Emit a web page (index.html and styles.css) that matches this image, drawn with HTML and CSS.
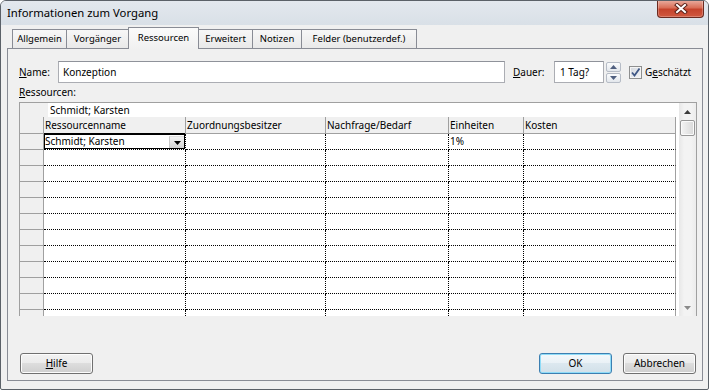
FILE: index.html
```html
<!DOCTYPE html>
<html lang="de">
<head>
    <meta charset="UTF-8">
    <meta name="viewport" content="width=device-width, initial-scale=1.0">
    <title>Informationen zum Vorgang</title>
    <link rel="stylesheet" href="styles.css">
</head>
<body>
    <div class="window">
        <div class="titlebar">
            <span class="title">Informationen zum Vorgang</span>
            <div class="close-btn">
                <svg width="14" height="11" viewBox="0 0 14 11">
                    <path d="M3 2 L11 9 M11 2 L3 9" stroke="#5c2219" stroke-width="4" stroke-linecap="square"/>
                    <path d="M3 2 L11 9 M11 2 L3 9" stroke="#ffffff" stroke-width="2" stroke-linecap="square"/>
                </svg>
            </div>
        </div>

        <div class="client">
            <div class="tabs">
                <div class="tab tab-first w-allgemein">Allgemein</div>
                <div class="tab w-vorgaenger">Vorgänger</div>
                <div class="tab tab-active w-ressourcen">Ressourcen</div>
                <div class="tab w-erweitert">Erweitert</div>
                <div class="tab w-notizen">Notizen</div>
                <div class="tab w-felder">Felder (benutzerdef.)</div>
            </div>

            <div class="panel">
                <div class="name-row">
                    <label class="lbl lbl-name"><u>N</u>ame:</label>
                    <div class="textbox name-box">Konzeption</div>
                    <label class="lbl lbl-dauer"><u>D</u>auer:</label>
                    <div class="textbox dauer-box">1 Tag?</div>
                    <div class="spinner">
                        <div class="spin-btn">
                            <svg width="7" height="4" viewBox="0 0 7 4"><path d="M0 4 L3.5 0 L7 4 Z" fill="#4f5f7f"/></svg>
                        </div>
                        <div class="spin-btn">
                            <svg width="7" height="4" viewBox="0 0 7 4"><path d="M0 0 L7 0 L3.5 4 Z" fill="#4f5f7f"/></svg>
                        </div>
                    </div>
                    <div class="checkbox">
                        <svg width="11" height="11" viewBox="0 0 11 11"><path d="M2 5.5 L4.5 8.5 L9.5 1.5" stroke="#3f5785" stroke-width="1.8" fill="none"/></svg>
                    </div>
                    <span class="check-label">G<u>e</u>schätzt</span>
                </div>

                <div class="res-label"><u>R</u>essourcen:</div>

                <div class="grid">
                    <div class="grid-main">
                        <div class="edit-bar">
                            <div class="edit-corner"></div>
                            <div class="edit-field">Schmidt; Karsten</div>
                        </div>

                        <div class="grow header-row">
                            <div class="rowhead corner"></div>
                            <div class="hcell c1">Ressourcenname</div>
                            <div class="hcell c2">Zuordnungsbesitzer</div>
                            <div class="hcell c3">Nachfrage/Bedarf</div>
                            <div class="hcell c4">Einheiten</div>
                            <div class="hcell c5">Kosten</div>
                        </div>

                        <div class="grow">
                            <div class="rowhead"></div>
                            <div class="cell c1">
                                <div class="sel-box">
                                    <span class="sel-text">Schmidt; Karsten</span>
                                    <div class="drop-btn">
                                        <svg width="7" height="4" viewBox="0 0 7 4"><path d="M0 0 L7 0 L3.5 4 Z" fill="#000"/></svg>
                                    </div>
                                </div>
                            </div>
                            <div class="cell c2"></div>
                            <div class="cell c3"></div>
                            <div class="cell c4">1%</div>
                            <div class="cell c5"></div>
                        </div>
                        <div class="grow"><div class="rowhead"></div><div class="cell c1"></div><div class="cell c2"></div><div class="cell c3"></div><div class="cell c4"></div><div class="cell c5"></div></div>
                        <div class="grow"><div class="rowhead"></div><div class="cell c1"></div><div class="cell c2"></div><div class="cell c3"></div><div class="cell c4"></div><div class="cell c5"></div></div>
                        <div class="grow"><div class="rowhead"></div><div class="cell c1"></div><div class="cell c2"></div><div class="cell c3"></div><div class="cell c4"></div><div class="cell c5"></div></div>
                        <div class="grow"><div class="rowhead"></div><div class="cell c1"></div><div class="cell c2"></div><div class="cell c3"></div><div class="cell c4"></div><div class="cell c5"></div></div>
                        <div class="grow"><div class="rowhead"></div><div class="cell c1"></div><div class="cell c2"></div><div class="cell c3"></div><div class="cell c4"></div><div class="cell c5"></div></div>
                        <div class="grow"><div class="rowhead"></div><div class="cell c1"></div><div class="cell c2"></div><div class="cell c3"></div><div class="cell c4"></div><div class="cell c5"></div></div>
                        <div class="grow"><div class="rowhead"></div><div class="cell c1"></div><div class="cell c2"></div><div class="cell c3"></div><div class="cell c4"></div><div class="cell c5"></div></div>
                        <div class="grow"><div class="rowhead"></div><div class="cell c1"></div><div class="cell c2"></div><div class="cell c3"></div><div class="cell c4"></div><div class="cell c5"></div></div>
                        <div class="grow"><div class="rowhead"></div><div class="cell c1"></div><div class="cell c2"></div><div class="cell c3"></div><div class="cell c4"></div><div class="cell c5"></div></div>
                        <div class="grow"><div class="rowhead"></div><div class="cell c1"></div><div class="cell c2"></div><div class="cell c3"></div><div class="cell c4"></div><div class="cell c5"></div></div>
                        <div class="grow"><div class="rowhead"></div><div class="cell c1"></div><div class="cell c2"></div><div class="cell c3"></div><div class="cell c4"></div><div class="cell c5"></div></div>
                    </div>

                    <div class="vscroll">
                        <div class="sb-btn">
                            <svg width="7" height="4" viewBox="0 0 7 4"><path d="M0 4 L3.5 0 L7 4 Z" fill="#3c3c3c"/></svg>
                        </div>
                        <div class="sb-thumb"></div>
                        <div class="sb-track"></div>
                        <div class="sb-btn">
                            <svg width="7" height="4" viewBox="0 0 7 4"><path d="M0 0 L7 0 L3.5 4 Z" fill="#8a8a8a"/></svg>
                        </div>
                    </div>
                </div>

                <div class="buttons">
                    <div class="btn btn-help"><u>H</u>ilfe</div>
                    <div class="btn btn-default">OK</div>
                    <div class="btn btn-cancel">Abbrechen</div>
                </div>
            </div>
        </div>
    </div>
</body>
</html>
```

FILE: styles.css
```css
* {
    box-sizing: border-box;
}
body {
    margin: 0;
    font-family: "Noto Sans", "Segoe UI", sans-serif;
    font-size: 10px;
    color: #000;
    background: #fff;
}
u {
    text-decoration-thickness: 1px;
    text-underline-offset: 1px;
}

.window {
    width: 709px;
    height: 390px;
    border: 1px solid #5b6168;
    border-radius: 6px 6px 2px 2px;
    background: #f0f0f0;
    display: flex;
    flex-direction: column;
    overflow: hidden;
}

/* title bar */
.titlebar {
    height: 24px;
    flex: none;
    display: flex;
    align-items: flex-start;
    background: linear-gradient(#e3e8ee, #d9e0e7);
}
.title {
    font-size: 11.3px;
    line-height: 14px;
    padding: 5px 0 0 6px;
}
.close-btn {
    margin: -1px 4px 0 auto;
    width: 47px;
    height: 18px;
    border: 1px solid #6b2a20;
    border-top: none;
    border-radius: 0 0 4px 4px;
    background: linear-gradient(#eab0a3, #d96f58 45%, #c5432c 55%, #d0583f);
    box-shadow: inset 0 0 0 1px rgba(255, 255, 255, 0.25);
    display: flex;
    align-items: center;
    justify-content: center;
}

/* dialog client */
.client {
    flex: 1;
    padding: 2px 5px 8px 6px;
    display: flex;
    flex-direction: column;
}
.tabs {
    height: 21px;
    flex: none;
    display: flex;
    align-items: flex-end;
    padding-left: 5px;
}
.tab {
    height: 19px;
    line-height: 18px;
    font-size: 9.5px;
    text-align: center;
    white-space: nowrap;
    border: 1px solid #898c95;
    border-left: none;
    border-bottom: none;
    background: linear-gradient(#f7f7f7, #e9e9e9);
}
.tab-first {
    border-left: 1px solid #898c95;
}
.tab-active {
    height: 22px;
    line-height: 20px;
    margin: 0 0 -1px -1px;
    border-left: 1px solid #898c95;
    background: linear-gradient(#fbfbfb, #f0f0f0);
    position: relative;
    z-index: 1;
}
.w-allgemein { width: 55px; }
.w-vorgaenger { width: 62px; }
.w-ressourcen { width: 71px; }
.w-erweitert { width: 54px; }
.w-notizen { width: 49px; }
.w-felder { width: 115px; }

.panel {
    flex: 1;
    border: 1px solid #898c95;
    background: #f0f0f0;
    padding: 12px 5px 6px 11px;
    display: flex;
    flex-direction: column;
}

/* name / duration row */
.name-row {
    display: flex;
    align-items: center;
    height: 22px;
}
.lbl-name {
    width: 39px;
}
.lbl-dauer {
    width: 41px;
    margin-left: 8px;
}
.textbox {
    height: 22px;
    line-height: 20px;
    border: 1px solid #abadb3;
    border-top-color: #8f929a;
    background: #fff;
    white-space: nowrap;
}
.name-box {
    width: 447px;
    padding-left: 4px;
}
.dauer-box {
    width: 50px;
    padding-left: 5px;
}
.spinner {
    width: 15px;
    height: 21px;
    margin-left: 2px;
    display: flex;
    flex-direction: column;
    gap: 1px;
}
.spin-btn {
    flex: 1;
    border: 1px solid #b6bcc6;
    border-radius: 2px;
    background: linear-gradient(#fbfcfd, #e3e7ec);
    display: flex;
    align-items: center;
    justify-content: center;
}
.checkbox {
    width: 13px;
    height: 13px;
    margin-left: 8px;
    border: 1px solid #8e8f8f;
    background: linear-gradient(135deg, #d3d7de, #f3f4f6);
    box-shadow: inset 0 0 0 1px #f4f4f4;
    display: flex;
    align-items: center;
    justify-content: center;
}
.check-label {
    margin-left: 3px;
}
.res-label {
    height: 19px;
    line-height: 19px;
}

/* resource grid */
.grid {
    width: 678px;
    height: 214px;
    flex: none;
    border: 1px solid #a0a0a0;
    border-bottom: none;
    background: #fff;
    display: flex;
    overflow: hidden;
}
.grid-main {
    width: 659px;
    display: flex;
    flex-direction: column;
}
.edit-bar {
    height: 14px;
    flex: none;
    display: flex;
}
.edit-corner {
    width: 28px;
    background: #f0f0f0;
}
.edit-field {
    flex: 1;
    line-height: 14px;
    padding-left: 2px;
}
.grow {
    height: 16px;
    flex: none;
    display: flex;
}
.header-row {
    height: 17px;
}
.rowhead {
    width: 24px;
    background: #f0f0f0;
    border-right: 1px solid #a0a0a0;
    border-bottom: 1px solid #a0a0a0;
}
.hcell {
    background: #f0f0f0;
    border-right: 1px solid #a0a0a0;
    border-bottom: 1px solid #a0a0a0;
    padding: 1px 0 0 1px;
    line-height: 15px;
    white-space: nowrap;
}
.cell {
    border-right: 1px dotted #000;
    border-bottom: 1px dotted #000;
    padding-left: 1px;
    line-height: 15px;
    white-space: nowrap;
}
.c1 { width: 142px; }
.c2 { width: 140px; }
.c3 { width: 123px; }
.c4 { width: 75px; }
.c5 { width: 152px; }
.cell.c5,
.hcell.c5 {
    border-right: 1px solid #a0a0a0;
}
.cell.c1 {
    padding-left: 0;
}
.sel-box {
    height: 15px;
    border: 1px solid #000;
    box-shadow: 0 -1px 0 #000;
    display: flex;
    line-height: 13px;
}
.sel-text {
    flex: 1;
}
.drop-btn {
    width: 15px;
    height: 12px;
    align-self: flex-end;
    background: linear-gradient(#f2f2f2, #d4d4d4);
    border-left: 1px solid #c8c8c8;
    border-top: 1px solid #e0e0e0;
    display: flex;
    align-items: center;
    justify-content: center;
}

.vscroll {
    width: 17px;
    margin-left: 2px;
    background: linear-gradient(to right, #e7e7e7, #f3f3f3 30%, #f3f3f3 70%, #ececec);
    display: flex;
    flex-direction: column;
    align-items: center;
}
.sb-btn {
    width: 17px;
    height: 17px;
    flex: none;
    display: flex;
    align-items: center;
    justify-content: center;
}
.sb-thumb {
    width: 15px;
    height: 16px;
    flex: none;
    border: 1px solid #979797;
    border-radius: 2px;
    background: linear-gradient(to right, #f4f4f4, #e6e6e6 50%, #d9d9d9);
    box-shadow: inset 0 0 0 1px #fafafa;
}
.sb-track {
    flex: 1;
}

/* bottom buttons */
.buttons {
    margin-top: auto;
    display: flex;
}
.btn {
    width: 73px;
    height: 21px;
    line-height: 19px;
    text-align: center;
    border: 1px solid #707070;
    border-radius: 3px;
    background: linear-gradient(#f2f2f2, #ebebeb 50%, #dddddd 50%, #cfcfcf);
    box-shadow: inset 0 0 0 1px #fcfcfc;
}
.btn-help {
    margin-left: 1px;
}
.btn-default {
    margin-left: auto;
    border-color: #3c7fb1;
    background: linear-gradient(#f3f8fb, #e9f1f6 50%, #dce8ef 50%, #d1e0e9);
    box-shadow: inset 0 0 0 1px #8fdcf8;
}
.btn-cancel {
    margin: 0 1px 0 11px;
}
```
